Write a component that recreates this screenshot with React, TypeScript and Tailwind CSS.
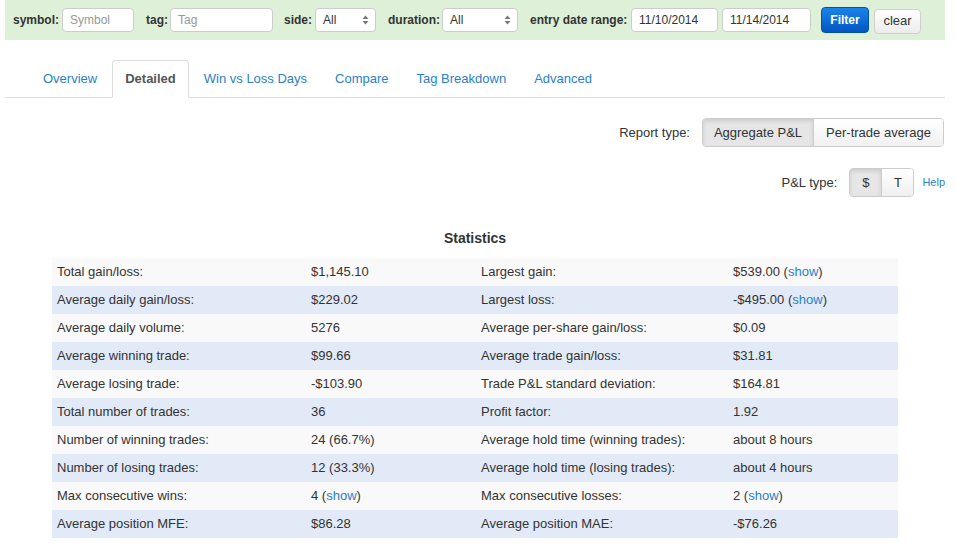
import React from "react";

const font = { fontFamily: '"Liberation Sans", Arial, Helvetica, sans-serif' };

function SelectBox({ w }: { w: string }) {
  return (
    <div className={`flex h-[24px] shrink-0 items-center justify-between rounded-[4px] border border-[#cccccc] bg-white pl-[7px] pr-[6px] text-[12px] text-[#333] ${w}`}>
      <span>All</span>
      <svg width="7" height="10" viewBox="0 0 7 10">
        <path d="M3.5 0.5 L6.5 4 L0.5 4 Z" fill="#777" />
        <path d="M3.5 9.5 L6.5 6 L0.5 6 Z" fill="#777" />
      </svg>
    </div>
  );
}

function Input({ w, ph, val }: { w: string; ph?: string; val?: string }) {
  return (
    <div className={`flex h-[24px] shrink-0 items-center rounded-[4px] border border-[#cccccc] bg-white px-[7px] text-[12px] ${w}`}>
      {ph ? <span className="text-[#999]">{ph}</span> : <span className="text-[#333]">{val}</span>}
    </div>
  );
}

function Label({ w, children }: { w: string; children: React.ReactNode }) {
  return <span className={`shrink-0 whitespace-nowrap font-bold text-[12px] text-[#333] ${w}`}>{children}</span>;
}

const Show = () => (
  <>
    {" ("}
    <span className="text-[#2a7fc9]">show</span>
    {")"}
  </>
);

const rows: [string, React.ReactNode, string, React.ReactNode][] = [
  ["Total gain/loss:", "$1,145.10", "Largest gain:", <>$539.00<Show /></>],
  ["Average daily gain/loss:", "$229.02", "Largest loss:", <>-$495.00<Show /></>],
  ["Average daily volume:", "5276", "Average per-share gain/loss:", "$0.09"],
  ["Average winning trade:", "$99.66", "Average trade gain/loss:", "$31.81"],
  ["Average losing trade:", "-$103.90", "Trade P&L standard deviation:", "$164.81"],
  ["Total number of trades:", "36", "Profit factor:", "1.92"],
  ["Number of winning trades:", "24 (66.7%)", "Average hold time (winning trades):", "about 8 hours"],
  ["Number of losing trades:", "12 (33.3%)", "Average hold time (losing trades):", "about 4 hours"],
  ["Max consecutive wins:", <>4<Show /></>, "Max consecutive losses:", <>2<Show /></>],
  ["Average position MFE:", "$86.28", "Average position MAE:", "-$76.26"],
];

export default function App() {
  return (
    <div style={font} className="w-[957px] h-[551px] overflow-hidden bg-white text-[13px] text-[#333]">
      <div className="ml-[5px] w-[940px]">
        {/* filter bar */}
        <div className="flex h-[40px] items-center bg-[#dff0d8] pl-[8px] text-[12px]">
          <Label w="w-[49px]">symbol:</Label>
          <Input w="w-[72px]" ph="Symbol" />
          <Label w="w-[36px] pl-[12px]">tag:</Label>
          <Input w="w-[103px]" ph="Tag" />
          <Label w="w-[42px] pl-[11px]">side:</Label>
          <SelectBox w="w-[61px]" />
          <Label w="w-[66px] pl-[12px]">duration:</Label>
          <SelectBox w="w-[76px]" />
          <Label w="w-[113px] pl-[12px]">entry date range:</Label>
          <Input w="w-[87px]" val="11/10/2014" />
          <div className="ml-[4px]">
            <Input w="w-[89px]" val="11/14/2014" />
          </div>
          <div className="ml-[10px] -mt-[1px] flex h-[26px] w-[48px] shrink-0 items-center justify-center rounded-[4px] border border-[#0550a8] bg-gradient-to-b from-[#1a84e8] to-[#0457c2] font-bold text-white">
            Filter
          </div>
          <div className="ml-[5px] mt-[2px] flex h-[25px] w-[47px] shrink-0 items-center justify-center rounded-[4px] border border-[#cfcfcf] bg-gradient-to-b from-white to-[#ececec] text-[13px] text-[#333]">
            clear
          </div>
        </div>

        {/* tabs */}
        <div className="mt-[20px] flex h-[38px] items-end border-b border-[#dddddd] pl-[23px]">
          <div className="mr-[2px] flex h-[37px] items-center pl-[15px] pr-[13px] text-[#2a7fc9]">Overview</div>
          <div className="mr-[2px] -mb-px flex h-[38px] items-center rounded-t-[4px] border border-[#dddddd] border-b-white bg-white px-[12px] font-bold text-[#555]">Detailed</div>
          <div className="mr-[2px] flex h-[37px] items-center px-[13px] text-[#2a7fc9]">Win vs Loss Days</div>
          <div className="mr-[2px] flex h-[37px] items-center px-[13px] text-[#2a7fc9]">Compare</div>
          <div className="mr-[2px] flex h-[37px] items-center px-[13px] text-[#2a7fc9]">Tag Breakdown</div>
          <div className="mr-[2px] flex h-[37px] items-center px-[13px] text-[#2a7fc9]">Advanced</div>
        </div>

        {/* report type */}
        <div className="mt-[20px] flex items-center justify-end">
          <span className="mr-[12px]">Report type:</span>
          <div className="flex h-[29px] rounded-[4px] border border-[#cccccc] overflow-hidden">
            <div className="flex w-[111px] items-center justify-center bg-[#e6e6e6] shadow-[inset_0_2px_4px_rgba(0,0,0,0.12)] border-r border-[#cccccc]">Aggregate P&amp;L</div>
            <div className="flex w-[129px] items-center justify-center bg-gradient-to-b from-white to-[#f0f0f0]">Per-trade average</div>
          </div>
          <div className="w-[1px]" />
        </div>

        {/* P&L type */}
        <div className="mt-[21px] flex items-center justify-end">
          <span className="mr-[12px]">P&amp;L type:</span>
          <div className="flex h-[29px] rounded-[4px] border border-[#cccccc] overflow-hidden">
            <div className="flex w-[32px] items-center justify-center bg-[#e6e6e6] shadow-[inset_0_2px_4px_rgba(0,0,0,0.12)] border-r border-[#cccccc]">$</div>
            <div className="flex w-[31px] items-center justify-center bg-gradient-to-b from-white to-[#f0f0f0]">T</div>
          </div>
          <span className="ml-[8px] text-[11px] text-[#2a7fc9]">Help</span>
        </div>

        {/* statistics */}
        <div className="mt-[31px] text-center text-[14px] font-bold leading-[20px]">Statistics</div>
        <div className="mx-auto mt-[10px] w-[846px]">
          {rows.map((r, i) => (
            <div
              key={i}
              className={`flex h-[28px] items-center ${i % 2 === 0 ? "bg-[#f9f9f9]" : "bg-[#e2eaf7]"}`}
            >
              <div className="w-[254px] pl-[5px]">{r[0]}</div>
              <div className="w-[170px] pl-[5px]">{r[1]}</div>
              <div className="w-[252px] pl-[5px]">{r[2]}</div>
              <div className="w-[170px] pl-[5px]">{r[3]}</div>
            </div>
          ))}
        </div>
      </div>
    </div>
  );
}
